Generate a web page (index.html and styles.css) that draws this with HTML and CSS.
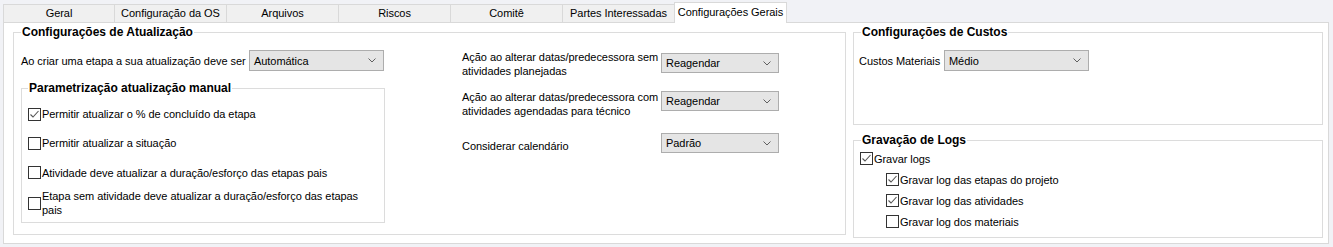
FILE: index.html
```html
<!DOCTYPE html>
<html lang="pt">
<head>
<meta charset="utf-8">
<title>Configurações Gerais</title>
<link rel="stylesheet" href="styles.css">
</head>
<body>
<div class="window">
  <div class="tabs">
    <div class="tab tab-first">Geral</div>
    <div class="tab">Configuração da OS</div>
    <div class="tab">Arquivos</div>
    <div class="tab">Riscos</div>
    <div class="tab">Comitê</div>
    <div class="tab">Partes Interessadas</div>
    <div class="tab tab-active">Configurações Gerais</div>
  </div>
  <div class="panel">
    <fieldset class="grp grp-update">
      <legend>Configurações de Atualização</legend>
      <div class="update-cols">
        <div class="col-left">
          <div class="row-create">
            <span class="lbl-create">Ao criar uma etapa a sua atualização deve ser</span>
            <div class="select sel-auto"><span>Automática</span><svg class="chev" width="8" height="5" viewBox="0 0 8 5"><polyline points="0.5,0.5 4,4 7.5,0.5" fill="none" stroke="#606060" stroke-width="1"/></svg></div>
          </div>
          <fieldset class="grp grp-manual">
            <legend>Parametrização atualização manual</legend>
            <div class="checks-manual">
              <div class="chk-row"><span class="box"><svg width="11" height="11" viewBox="0 0 11 11"><polyline points="1.5,5.5 4,8 9.5,2" fill="none" stroke="#555" stroke-width="1.1"/></svg></span><span class="chk-text">Permitir atualizar o % de concluído da etapa</span></div>
              <div class="chk-row"><span class="box"></span><span class="chk-text">Permitir atualizar a situação</span></div>
              <div class="chk-row"><span class="box"></span><span class="chk-text">Atividade deve atualizar a duração/esforço das etapas pais</span></div>
              <div class="chk-row"><span class="box"></span><span class="chk-text">Etapa sem atividade deve atualizar a duração/esforço das etapas<br>pais</span></div>
            </div>
          </fieldset>
        </div>
        <div class="col-mid">
          <div class="mid-row mid-row1">
            <span class="mid-lbl">Ação ao alterar datas/predecessora sem<br>atividades planejadas</span>
            <div class="select sel-mid"><span>Reagendar</span><svg class="chev" width="8" height="5" viewBox="0 0 8 5"><polyline points="0.5,0.5 4,4 7.5,0.5" fill="none" stroke="#606060" stroke-width="1"/></svg></div>
          </div>
          <div class="mid-row mid-row2">
            <span class="mid-lbl">Ação ao alterar datas/predecessora com<br>atividades agendadas para técnico</span>
            <div class="select sel-mid"><span>Reagendar</span><svg class="chev" width="8" height="5" viewBox="0 0 8 5"><polyline points="0.5,0.5 4,4 7.5,0.5" fill="none" stroke="#606060" stroke-width="1"/></svg></div>
          </div>
          <div class="mid-row mid-row3">
            <span class="mid-lbl lbl-cal">Considerar calendário</span>
            <div class="select sel-mid"><span>Padrão</span><svg class="chev" width="8" height="5" viewBox="0 0 8 5"><polyline points="0.5,0.5 4,4 7.5,0.5" fill="none" stroke="#606060" stroke-width="1"/></svg></div>
          </div>
        </div>
      </div>
    </fieldset>
    <div class="col-right">
      <fieldset class="grp grp-costs">
        <legend>Configurações de Custos</legend>
        <div class="row-costs">
          <span class="lbl-costs">Custos Materiais</span>
          <div class="select sel-costs"><span>Médio</span><svg class="chev" width="8" height="5" viewBox="0 0 8 5"><polyline points="0.5,0.5 4,4 7.5,0.5" fill="none" stroke="#606060" stroke-width="1"/></svg></div>
        </div>
      </fieldset>
      <fieldset class="grp grp-logs">
        <legend>Gravação de Logs</legend>
        <div class="checks-logs">
          <div class="chk-row"><span class="box"><svg width="11" height="11" viewBox="0 0 11 11"><polyline points="1.5,5.5 4,8 9.5,2" fill="none" stroke="#555" stroke-width="1.1"/></svg></span><span class="chk-text">Gravar logs</span></div>
          <div class="chk-row sub"><span class="box"><svg width="11" height="11" viewBox="0 0 11 11"><polyline points="1.5,5.5 4,8 9.5,2" fill="none" stroke="#555" stroke-width="1.1"/></svg></span><span class="chk-text">Gravar log das etapas do projeto</span></div>
          <div class="chk-row sub"><span class="box"><svg width="11" height="11" viewBox="0 0 11 11"><polyline points="1.5,5.5 4,8 9.5,2" fill="none" stroke="#555" stroke-width="1.1"/></svg></span><span class="chk-text">Gravar log das atividades</span></div>
          <div class="chk-row sub"><span class="box"></span><span class="chk-text">Gravar log dos materiais</span></div>
        </div>
      </fieldset>
    </div>
  </div>
</div>
</body>
</html>
```
FILE: styles.css
```css
* { box-sizing: border-box; }
html, body { margin: 0; padding: 0; }
body {
  background: #f1f2f6;
  font-family: "Segoe UI", "Liberation Sans", Arial, sans-serif;
  font-size: 11px;
  letter-spacing: -0.05px;
  color: #000;
  width: 1333px;
  height: 247px;
  overflow: hidden;
}
.window { padding-left: 3px; }

/* tabs */
.tabs {
  display: flex;
  align-items: flex-end;
  height: 23px;
  margin-bottom: -1px;
  position: relative;
  z-index: 1;
}
.tab {
  width: 112px;
  height: 19px;
  background: #f0f0f0;
  border: 1px solid #d9d9d9;
  border-right: none;
  text-align: center;
  line-height: 17px;
  white-space: nowrap;
}
.tab-first { width: 111px; }
.tab-active {
  height: 21px;
  width: 113px;
  background: #fff;
  border-right: 1px solid #d9d9d9;
  border-bottom: none;
  line-height: 19px;
}

/* panel */
.panel {
  width: 1326px;
  height: 222px;
  background: #fff;
  border: 1px solid #d9d9d9;
  display: flex;
  align-items: flex-start;
  padding: 1px 0 0 9px;
  gap: 7px;
}

.grp {
  margin: 0;
  border: 1px solid #dcdcdc;
  min-width: 0;
}
.grp legend {
  font-weight: bold;
  font-size: 12px;
  letter-spacing: 0;
  line-height: 16px;
  padding: 0 1px;
}

.grp-update {
  width: 833px;
  height: 211px;
  padding: 10px 7px 0 7px;
}

.update-cols { display: flex; }
.col-left { width: 364px; }
.col-mid { margin-left: 77px; }

.row-create {
  display: flex;
  align-items: center;
  height: 21px;
}
.lbl-create { width: 228px; white-space: nowrap; }

.select {
  height: 21px;
  background: #e5e5e5;
  border: 1px solid #adadad;
  display: flex;
  align-items: center;
  justify-content: space-between;
  padding: 0 7px 0 4px;
  white-space: nowrap;
}
.chev { display: block; }
.sel-auto { width: 135px; }
.sel-mid { width: 118px; height: 20px; }
.sel-costs { width: 145px; }

.grp-manual {
  margin-top: 9px;
  width: 364px;
  height: 143px;
  padding: 3px 6px 0 6px;
}

.checks-manual {
  display: grid;
  grid-template-rows: 30px 28px 31px 30px;
}
.chk-row {
  display: flex;
  align-items: center;
}
.box {
  flex: none;
  width: 13px;
  height: 13px;
  border: 1px solid #333;
  background: #fff;
  display: flex;
  align-items: center;
  justify-content: center;
  margin-right: 1px;
}
.box svg { display: block; }
.chk-text { line-height: 14px; white-space: nowrap; }

.mid-row {
  display: flex;
  align-items: flex-start;
}
.mid-lbl {
  width: 199px;
  line-height: 14px;
  white-space: nowrap;
}
.mid-row1 .select { margin-top: 3px; }
.mid-row2 { margin-top: 12px; }
.mid-row2 .select { margin-top: 1px; }
.mid-row3 { margin-top: 15px; }
.lbl-cal { margin-top: 6px; }

.col-right {
  width: 470px;
  display: flex;
  flex-direction: column;
  gap: 7px;
}
.grp-costs {
  height: 101px;
  padding: 10px 5px 0 5px;
}
.grp-costs > legend { margin-left: 2px; }
.row-costs {
  display: flex;
  align-items: center;
  height: 21px;
}
.lbl-costs { width: 85px; white-space: nowrap; }

.grp-logs {
  height: 106px;
  padding: 0 6px 0 6px;
}
.grp-logs > legend { margin-left: 1px; }
.checks-logs {
  display: grid;
  grid-template-rows: 21px 21px 21px 21px;
}
.chk-row.sub { margin-left: 26px; }
```
